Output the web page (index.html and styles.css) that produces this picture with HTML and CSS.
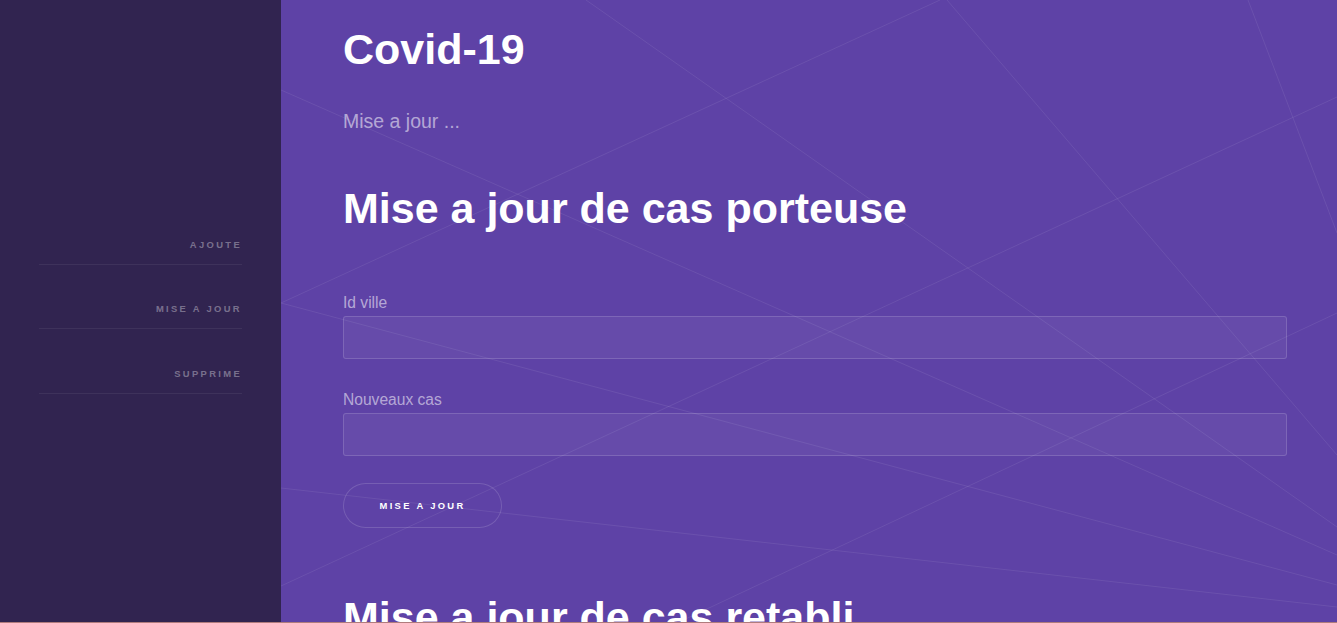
FILE: index.html
```html
<!DOCTYPE html>
<html lang="fr">
<head>
<meta charset="utf-8">
<title>Covid-19</title>
<link rel="stylesheet" href="styles.css">
</head>
<body>
  <aside class="sidebar">
    <nav>
      <ul class="nav-list">
        <li><a class="nav-link" href="#">Ajoute</a></li>
        <li><a class="nav-link" href="#">Mise a jour</a></li>
        <li><a class="nav-link" href="#">Supprime</a></li>
      </ul>
    </nav>
  </aside>
  <main class="main">
    <svg class="bg-lines" width="1056" height="623" viewBox="0 0 1056 623" aria-hidden="true">
      <g stroke="rgba(255,255,255,0.08)" stroke-width="1" fill="none">
        <line x1="666" y1="0" x2="1056" y2="455"/>
        <line x1="967" y1="0" x2="1056" y2="233"/>
        <line x1="0" y1="586" x2="1056" y2="97"/>
        <line x1="0" y1="303" x2="659" y2="0"/>
        <line x1="305" y1="0" x2="1056" y2="527"/>
        <line x1="0" y1="90" x2="1056" y2="555"/>
        <line x1="0" y1="303" x2="1056" y2="585"/>
        <line x1="0" y1="488" x2="1056" y2="607"/>
        <line x1="396" y1="623" x2="1056" y2="313"/>
      </g>
    </svg>
    <div class="content">
      <h1 class="page-title">Covid-19</h1>
      <p class="lead">Mise a jour ...</p>

      <section class="section">
        <h2 class="section-title">Mise a jour de cas porteuse</h2>
        <form class="form">
          <div class="field">
            <label class="field-label" for="idville">Id ville</label>
            <input class="field-input" type="text" id="idville">
          </div>
          <div class="field">
            <label class="field-label" for="nouveaux">Nouveaux cas</label>
            <input class="field-input" type="text" id="nouveaux">
          </div>
          <div class="actions">
            <button class="btn" type="button">Mise a jour</button>
          </div>
        </form>
      </section>

      <section class="section section-next">
        <h2 class="section-title">Mise a jour de cas retabli</h2>
        <form class="form">
          <div class="field">
            <label class="field-label" for="idville2">Id ville</label>
            <input class="field-input" type="text" id="idville2">
          </div>
        </form>
      </section>
    </div>
  </main>
</body>
</html>
```

FILE: styles.css
```css
html, body {
  margin: 0;
  padding: 0;
}

body {
  height: 100vh;
  box-sizing: border-box;
  border-bottom: 1px solid #b07c7c;
  display: flex;
  overflow: hidden;
  background: #5e42a6;
  font-family: "Liberation Sans", Arial, sans-serif;
}

/* Sidebar */
.sidebar {
  width: 281px;
  flex: none;
  box-sizing: border-box;
  background: #312450;
  padding: 200px 39px 0 39px;
}

.nav-list {
  list-style: none;
  margin: 0;
  padding: 0;
}

.nav-link {
  display: block;
  text-align: right;
  font-size: 9.4px;
  font-weight: bold;
  line-height: 12px;
  letter-spacing: 0.25em;
  text-transform: uppercase;
  text-decoration: none;
  color: rgba(255, 255, 255, 0.36);
  padding: 38.7px 0 13px;
  border-bottom: 1px solid rgba(255, 255, 255, 0.065);
}

/* Main */
.main {
  flex: 1;
  position: relative;
  overflow: hidden;
  padding: 24px 50px 0 62px;
}

.bg-lines {
  position: absolute;
  top: 0;
  left: 0;
}

.content {
  position: relative;
}

.page-title,
.section-title {
  margin: 0;
  color: #ffffff;
  font-size: 43px;
  line-height: 51.6px;
  font-weight: bold;
}

.lead {
  margin: 31px 0 0;
  font-size: 19.5px;
  line-height: 29px;
  color: rgba(255, 255, 255, 0.55);
}

.section {
  margin-top: 47px;
}

.section-next {
  margin-top: 64px;
}

.form {
  margin-top: 58px;
}

.field + .field {
  margin-top: 30px;
}

.field-label {
  display: block;
  font-size: 15.6px;
  line-height: 22px;
  margin-bottom: 2px;
  color: rgba(255, 255, 255, 0.55);
}

.field-input {
  display: block;
  width: 100%;
  box-sizing: border-box;
  height: 43px;
  margin: 0;
  padding: 0 12px;
  background: rgba(255, 255, 255, 0.05);
  border: 1px solid rgba(255, 255, 255, 0.15);
  border-radius: 3px;
  color: #fff;
  font-family: inherit;
  outline: none;
}

.actions {
  margin-top: 27px;
}

.btn {
  display: inline-block;
  height: 45px;
  padding: 0 36.5px;
  margin: 0;
  border: none;
  border-radius: 22.5px;
  background: transparent;
  box-shadow: inset 0 0 0 1px rgba(255, 255, 255, 0.15);
  color: #ffffff;
  font-family: "Liberation Sans", Arial, sans-serif;
  font-size: 9.4px;
  font-weight: bold;
  letter-spacing: 0.25em;
  text-transform: uppercase;
  cursor: pointer;
}
```
